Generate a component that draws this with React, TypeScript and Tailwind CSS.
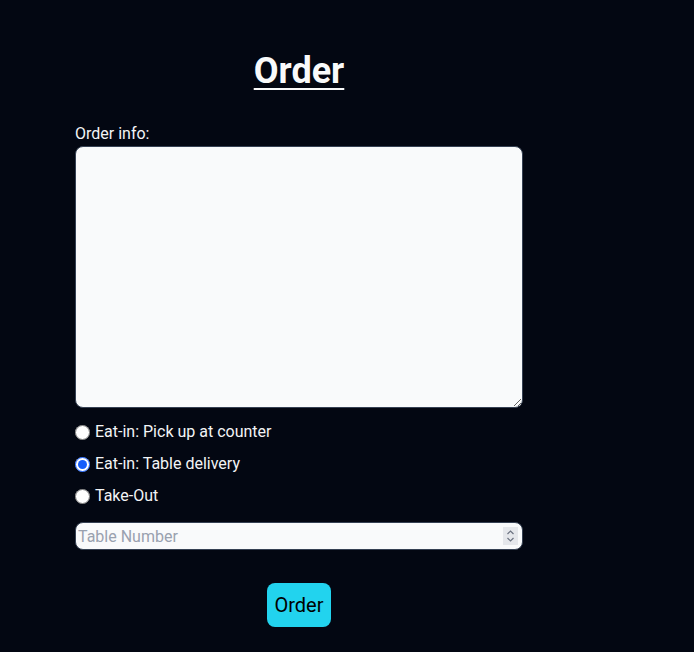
import { useState } from 'react';

export default function App() {
  const [mode, setMode] = useState('table');

  return (
    <div className="min-h-[652px] bg-[#030712] text-gray-100 font-['Roboto',sans-serif]">
      <div className="ml-[75px] w-[448px] pt-[51px] flex flex-col">
        <h1 className="text-4xl font-bold text-center underline underline-offset-[5px] decoration-2 text-gray-50">Order</h1>

        <label className="mt-[31px] text-base leading-6">Order info:</label>
        <textarea className="h-[262px] w-full rounded-lg border border-gray-700 bg-gray-50 text-black" />

        <div className="mt-[12px] flex flex-col gap-2">
          {[
            ['counter', 'Eat-in: Pick up at counter'],
            ['table', 'Eat-in: Table delivery'],
            ['takeout', 'Take-Out'],
          ].map(([value, text]) => (
            <label key={value} className="flex items-center h-6 gap-[5px] text-base">
              <input
                type="radio"
                name="mode"
                value={value}
                checked={mode === value}
                onChange={() => setMode(value)}
                className="w-[15px] h-[15px] m-0 accent-blue-600"
              />
              {text}
            </label>
          ))}
        </div>

        <div className="relative mt-[14px]">
          <input
            type="number"
            placeholder="Table Number"
            className="h-7 w-full rounded-lg border border-gray-700 bg-gray-50 px-[2px] text-base text-black placeholder:text-gray-400 [appearance:textfield]"
          />
          {/* spinner */}
          <div className="absolute right-[5px] top-[5px] w-[15px] h-[18px] bg-gray-200 flex items-center justify-center pointer-events-none">
            <svg width="9" height="14" viewBox="0 0 9 14" fill="none" stroke="#6b7280" strokeWidth="1.2">
              <path d="M1.5 5 L4.5 2 L7.5 5" />
              <path d="M1.5 9 L4.5 12 L7.5 9" />
            </svg>
          </div>
        </div>

        <button className="mt-[33px] self-center h-11 px-[7px] rounded-lg bg-[#22d3ee] text-xl text-black">Order</button>
      </div>
    </div>
  );
}
